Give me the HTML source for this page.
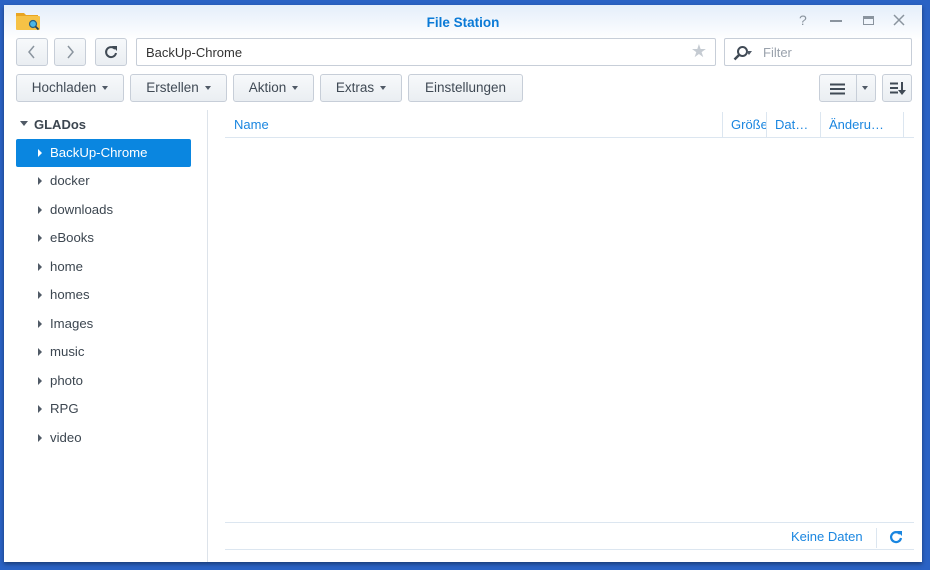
<!DOCTYPE html>
<html><head><style>
*{margin:0;padding:0;box-sizing:border-box}
body{width:930px;height:570px;background:#2a62c4;font-family:"Liberation Sans",sans-serif;font-size:13px;color:#333;position:relative;overflow:hidden}
.win{position:absolute;left:4px;top:5px;width:918px;height:557px;background:#fff;box-shadow:0 2px 4px rgba(0,0,0,.4)}
.hdr{position:absolute;left:0;top:0;width:918px;height:105px;background:linear-gradient(#e4eefa,#fff 35px)}
.title{position:absolute;left:0;right:0;top:10px;text-align:center;color:#0a7ad6;font-weight:bold;font-size:13.5px}
.btn{position:absolute;height:28px;border:1px solid #c7ced8;border-radius:3px;background:linear-gradient(#f7f9fb,#eaeef2);color:#404a55;font-size:13.5px;line-height:26px;text-align:center}
.car{display:inline-block;width:0;height:0;border-left:3.5px solid transparent;border-right:3.5px solid transparent;border-top:4px solid #505a66;vertical-align:middle;margin-left:6px}
.inp{position:absolute;height:28px;border:1px solid #c7ced8;border-radius:2px;background:#fff}
.side{position:absolute;left:0;top:105px;width:204px;height:452px;border-right:1px solid #dde3ea}
.item{position:absolute;left:12px;width:175px;height:28px;line-height:28px;padding-left:34px;color:#3c4650;font-size:13.2px}
.item:before{content:"";position:absolute;left:22px;top:10px;border-top:4px solid transparent;border-bottom:4px solid transparent;border-left:4px solid #505a66}
.sel{background:#0a86e0;color:#fff;border-radius:2px}
.sel:before{border-left-color:#fff}
.col{position:absolute;top:107px;height:25px;line-height:25px;color:#1a86e0;font-size:13px;border-left:1px solid #dce6f0;padding-left:8px;overflow:hidden;white-space:nowrap}
</style></head><body>
<div class="win">
<div class="hdr"></div>
<svg style="position:absolute;left:12px;top:6px" width="24" height="20" viewBox="0 0 24 20"><path d="M0 2h8l2 2h12v14H0z" fill="#e9a522"/><rect x="0" y="5" width="24" height="14" rx="1" fill="#f6c246"/><circle cx="17" cy="13" r="3.5" fill="#4ab6e8" stroke="#2a6080" stroke-width="1.2"/><path d="M19.5 15.5l3 3" stroke="#2a4050" stroke-width="1.8"/></svg>
<div class="title">File Station</div>
<div style="position:absolute;left:795px;top:7px;color:#8a949e;font-size:14px">?</div>
<div style="position:absolute;left:826px;top:15px;width:12px;height:1.5px;background:#8a949e"></div>
<div style="position:absolute;left:859px;top:11px;width:11px;height:9px;border:1.5px solid #8a949e;border-top-width:3px"></div>
<svg style="position:absolute;left:889px;top:9px" width="12" height="12"><path d="M1 1l10 10M11 1L1 11" stroke="#8a949e" stroke-width="1.5"/></svg>

<div class="btn" style="left:12px;top:33px;width:32px"><svg width="10" height="14" style="margin-top:6px"><path d="M7 1L2 7l5 6" fill="none" stroke="#8a949e" stroke-width="1.5"/></svg></div>
<div class="btn" style="left:50px;top:33px;width:32px"><svg width="10" height="14" style="margin-top:6px"><path d="M3 1l5 6-5 6" fill="none" stroke="#8a949e" stroke-width="1.5"/></svg></div>
<div class="btn" style="left:91px;top:33px;width:32px"><svg width="14" height="14" style="margin-top:6px" viewBox="0 0 14 14"><path d="M11 4A5 5 0 1 0 12 8" fill="none" stroke="#404a55" stroke-width="2"/><path d="M8 1h5v5z" fill="#404a55"/></svg></div>
<div class="inp" style="left:132px;top:33px;width:580px"><span style="position:absolute;left:9px;top:6px;font-size:13px;color:#333">BackUp-Chrome</span><span style="position:absolute;right:8px;top:2px;color:#c5cbd2;font-size:18px">★</span></div>
<div class="inp" style="left:720px;top:33px;width:188px"><svg style="position:absolute;left:8px;top:6px" width="16" height="16"><circle cx="9.5" cy="6.5" r="4.5" fill="none" stroke="#404a55" stroke-width="2"/><path d="M6 10l-4.5 4.5" stroke="#404a55" stroke-width="2.5"/></svg><span class="car" style="position:absolute;left:21px;top:12px;margin:0"></span><span style="position:absolute;left:38px;top:6px;color:#9aa2ac;font-size:13px">Filter</span></div>

<div class="btn" style="left:12px;top:69px;width:108px">Hochladen<span class="car"></span></div>
<div class="btn" style="left:126px;top:69px;width:97px">Erstellen<span class="car"></span></div>
<div class="btn" style="left:229px;top:69px;width:81px">Aktion<span class="car"></span></div>
<div class="btn" style="left:316px;top:69px;width:82px">Extras<span class="car"></span></div>
<div class="btn" style="left:404px;top:69px;width:115px">Einstellungen</div>
<div class="btn" style="left:815px;top:69px;width:57px;text-align:left"><svg style="position:absolute;left:10px;top:8px" width="16" height="12"><path d="M0 1.5h15M0 6h15M0 10.5h15" stroke="#404a55" stroke-width="2"/></svg><div style="position:absolute;left:36px;top:0;bottom:0;border-left:1px solid #c7ced8"></div><span class="car" style="position:absolute;left:42px;top:11px;margin:0"></span></div>
<div class="btn" style="left:878px;top:69px;width:30px"><svg style="position:absolute;left:7px;top:7px" width="16" height="14"><path d="M0 1.5h8M0 6h8M0 10.5h8M12 0v11" stroke="#404a55" stroke-width="2"/><path d="M8 8h8l-4 5z" fill="#404a55"/></svg></div>

<div class="side">
<div style="position:absolute;left:16px;top:11px;border-left:4px solid transparent;border-right:4px solid transparent;border-top:5px solid #505a66"></div>
<div style="position:absolute;left:30px;top:7px;font-weight:bold;color:#3c4650;font-size:13px">GLADos</div>
<div class="item sel" style="top:29px">BackUp-Chrome</div>
<div class="item" style="top:57px">docker</div>
<div class="item" style="top:86px">downloads</div>
<div class="item" style="top:114px">eBooks</div>
<div class="item" style="top:143px">home</div>
<div class="item" style="top:171px">homes</div>
<div class="item" style="top:200px">Images</div>
<div class="item" style="top:228px">music</div>
<div class="item" style="top:257px">photo</div>
<div class="item" style="top:285px">RPG</div>
<div class="item" style="top:314px">video</div>
</div>

<div style="position:absolute;left:221px;top:107px;width:689px;height:26px;border-bottom:1px solid #dce6f0"></div>
<div class="col" style="left:221px;width:498px;border-left:none;padding-left:9px">Name</div>
<div class="col" style="left:718px;width:44px;padding-left:8px">Größe</div>
<div class="col" style="left:762px;width:55px">Dat…</div>
<div class="col" style="left:816px;width:84px">Änderu…</div>
<div style="position:absolute;left:899px;top:107px;height:25px;border-left:1px solid #dce6f0"></div>

<div style="position:absolute;left:221px;top:517px;width:689px;border-top:1px solid #dce6f0"></div>
<div style="position:absolute;left:221px;top:544px;width:689px;border-top:1px solid #dce6f0"></div>
<div style="position:absolute;left:787px;top:524px;color:#1a86e0;font-size:13px">Keine Daten</div>
<div style="position:absolute;left:872px;top:523px;height:20px;border-left:1px solid #dce6f0"></div>
<svg style="position:absolute;left:885px;top:525px" width="14" height="14" viewBox="0 0 14 14"><path d="M11 4A5 5 0 1 0 12 8" fill="none" stroke="#1a86e0" stroke-width="2.2"/><path d="M8 1h5v5z" fill="#1a86e0"/></svg>
</div>
</body></html>
